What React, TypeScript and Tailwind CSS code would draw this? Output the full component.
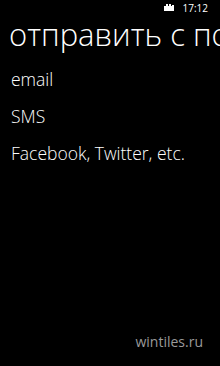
export default function App() {
  const items = ["email", "SMS", "Facebook, Twitter, etc."];
  return (
    <div className="w-[220px] h-[366px] bg-black text-white overflow-hidden flex flex-col" style={{ fontFamily: '"Open Sans", "Noto Sans", sans-serif' }}>
      <div className="h-[14px] flex items-center justify-end gap-[9px] pr-[12px] pt-[1px]">
        <svg width="10" height="7" viewBox="0 0 10 7" fill="#fff">
          <rect x="0" y="2" width="10" height="5" />
          <rect x="2" y="0" width="2" height="2" />
          <rect x="5" y="0" width="2" height="2" />
          <rect x="8" y="1" width="2" height="1" />
        </svg>
        <span className="text-[10px] leading-none text-white">17:12</span>
      </div>
      <div className="pl-[9px] whitespace-nowrap text-[31px] font-light leading-[40px]">отправить с помощью</div>
      <ul className="pl-[11px] mt-[14px] flex flex-col gap-[14px]">
        {items.map((t) => (
          <li key={t} className="text-[17.5px] font-light leading-[23px]">{t}</li>
        ))}
      </ul>
      <div className="mt-auto mb-[14px] pr-[17px] text-right text-[14px] text-[#9a9a9a]">wintiles.ru</div>
    </div>
  );
}
